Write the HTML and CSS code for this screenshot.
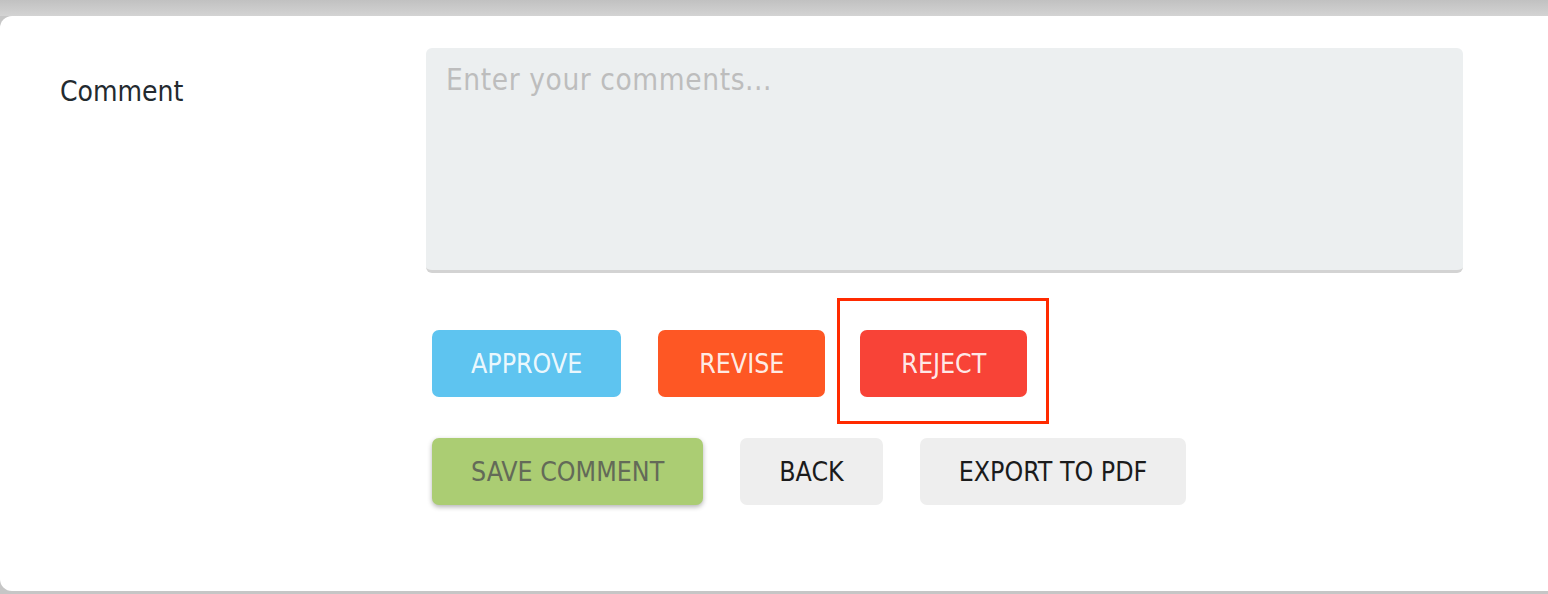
FILE: index.html
```html
<!DOCTYPE html>
<html lang="en">
<head>
<meta charset="utf-8">
<title>Comment</title>
<link rel="stylesheet" href="styles.css">
</head>
<body>
<main class="card">
  <div class="row">
    <label class="label" for="comment">Comment</label>
    <div class="content">
      <textarea id="comment" class="comment-box" placeholder="Enter your comments..."></textarea>
      <div class="actions">
        <button class="btn btn-approve">APPROVE</button>
        <button class="btn btn-revise">REVISE</button>
        <span class="highlight-wrap">
          <button class="btn btn-reject">REJECT</button>
          <span class="highlight"></span>
        </span>
      </div>
      <div class="actions actions-second">
        <button class="btn btn-save">SAVE COMMENT</button>
        <button class="btn btn-plain">BACK</button>
        <button class="btn btn-plain">EXPORT TO PDF</button>
      </div>
    </div>
  </div>
</main>
</body>
</html>
```
FILE: styles.css
```css
html, body {
  margin: 0;
  padding: 0;
}
body {
  width: 1548px;
  height: 594px;
  overflow: hidden;
  background: linear-gradient(to bottom, #c1c1c1 0, #d3d3d3 16px, #c6c6c6 16px, #c6c6c6 100%);
  font-family: "DejaVu Sans", Verdana, sans-serif;
  font-stretch: condensed;
}
.card {
  margin-top: 16px;
  height: 575px;
  box-sizing: border-box;
  background: #ffffff;
  border-radius: 12px 0 0 12px;
  padding: 32px 0 0 60px;
}
.row {
  display: flex;
}
.label {
  width: 366px;
  flex: none;
  padding-top: 29px;
  font-size: 28px;
  line-height: 30px;
  color: #232a2f;
}
.content {
  display: flex;
  flex-direction: column;
}
.comment-box {
  box-sizing: border-box;
  width: 1037px;
  height: 225px;
  margin: 0;
  padding: 17px 20px;
  border: none;
  border-bottom: 3px solid #d3d3d3;
  border-radius: 6px;
  background: #eceff0;
  font-family: inherit;
  font-stretch: condensed;
  font-size: 29.5px;
  letter-spacing: 0.6px;
  line-height: 30px;
  color: #333;
  resize: none;
  outline: none;
}
.comment-box::placeholder {
  color: #bdbdbd;
}
.actions {
  display: flex;
  gap: 37px;
  margin: 57px 0 0 6px;
  align-items: center;
}
.actions-second {
  margin-top: 41px;
}
.btn {
  height: 67px;
  padding: 0 39px;
  border: none;
  border-radius: 7px;
  font-family: inherit;
  font-stretch: condensed;
  font-size: 26.5px;
  color: rgba(255, 255, 255, 0.9);
  cursor: pointer;
}
.btn-approve { background: #5ec4f0; }
.btn-revise {
  background: #fe5724;
  min-width: 167px;
}
.btn-reject {
  background: #f84337;
  min-width: 167px;
}
.btn-save {
  background: #abcd73;
  color: #636a58;
  box-shadow: 0 2px 5px rgba(0, 0, 0, 0.3);
}
.btn-plain {
  background: #eeeeee;
  color: #1b1b1b;
}
.highlight-wrap {
  position: relative;
  display: inline-flex;
  margin-left: -2px;
}
.highlight {
  position: absolute;
  left: -23px;
  top: -32px;
  width: 212px;
  height: 126px;
  box-sizing: border-box;
  border: 3px solid #ff2a00;
  pointer-events: none;
}
```
